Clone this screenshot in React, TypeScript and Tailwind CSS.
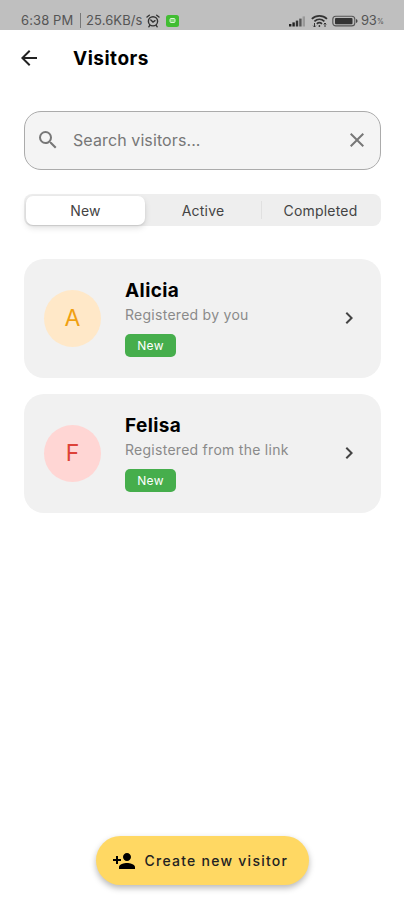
import React, { useState } from "react";
import {
  MdArrowBack,
  MdChevronRight,
  MdClose,
  MdPersonAdd,
  MdSearch,
} from "react-icons/md";

const tabs = ["New", "Active", "Completed"];

const visitors = [
  {
    name: "Alicia",
    source: "Registered by you",
    status: "New",
    avatar: "bg-[#ffe8c8] text-[#f0a010]",
  },
  {
    name: "Felisa",
    source: "Registered from the link",
    status: "New",
    avatar: "bg-[#ffd6d4] text-[#dd4238]",
  },
];

function StatusBar() {
  return (
    <div className="flex h-[30px] items-center justify-between bg-[#bfbfbf] pt-[11px] pr-[20px] pl-[21px] text-[13px] text-[#555]">
      <div className="flex items-center">
        <span className="w-[54px] whitespace-nowrap tracking-[0.1px]">
          6:38 PM
        </span>
        <span className="ml-[5px] h-[15px] w-px bg-[#777]" />
        <span className="ml-[5px] w-[58px] whitespace-nowrap tracking-[0.1px]">
          25.6KB/s
        </span>
        <svg
          className="ml-[2px] h-[14px] w-[14px]"
          viewBox="0 0 14 14"
          fill="none"
          stroke="#333"
          strokeWidth="1.4"
          strokeLinecap="round"
        >
          <circle cx="7" cy="7.3" r="4.6" />
          <path d="M1 3 3.3 1.2M13 3l-2.3-1.8M4.8 6 7 8l2-1.3M3.8 11.4 2.8 12.8M10.2 11.4l1 1.4" />
        </svg>
        <svg className="ml-[6px] h-3 w-[13px]" viewBox="0 0 13 12">
          <rect width="13" height="12" rx="2.5" fill="#41bd32" />
          <rect
            x="4"
            y="3.5"
            width="5"
            height="4"
            rx="1"
            fill="#7ed673"
            stroke="#d9f5d5"
          />
        </svg>
      </div>
      <div className="flex items-center">
        <svg className="h-3 w-[17px]" viewBox="0 0 17 12">
          <rect x="0" y="9" width="2.4" height="2.5" fill="#222" />
          <rect x="3.4" y="7.4" width="2.4" height="4.1" fill="#222" />
          <rect x="6.8" y="5.6" width="2.4" height="5.9" fill="#333" />
          <rect x="10.2" y="3.6" width="2.4" height="7.9" fill="#555" />
          <rect x="13.6" y="1.4" width="2.4" height="10.1" fill="#999" />
        </svg>
        <svg
          className="ml-[5px] h-[14px] w-[17px]"
          viewBox="0 0 17 14"
          fill="none"
          stroke="#333"
          strokeWidth="1.7"
        >
          <path d="M.8 4.8c4.4-4 10.8-4 15.2 0M3.4 7.4c3-2.7 7-2.7 10 0M5.8 9.8c1.6-1.4 3.6-1.4 5.2 0" />
          <circle cx="8.4" cy="12" r=".9" fill="#333" stroke="none" />
          <path
            d="M3.5 9v4M2.2 11.7l1.3 1.3 1.3-1.3M14 13V9M12.7 10.3 14 9l1.3 1.3"
            strokeWidth="1"
          />
        </svg>
        <svg className="ml-[4px] h-[12px] w-[26px]" viewBox="0 0 26 12">
          <rect
            x=".8"
            y="1.3"
            width="22"
            height="9.6"
            rx="3"
            fill="#bbb"
            stroke="#555"
            strokeWidth="1.1"
          />
          <rect x="3" y="3" width="17.5" height="6.2" rx="1" fill="#333" />
          <path d="M24 4v4q1.6-.5 1.6-2T24 4" fill="#444" />
        </svg>
        <span className="ml-[3px] w-4 tracking-[-0.2px]">93</span>
        <span className="w-[7px] pt-[3px] text-[7px]">%</span>
      </div>
    </div>
  );
}

export default function App() {
  const [activeTab, setActiveTab] = useState("New");
  const [query, setQuery] = useState("");

  return (
    <div className="flex h-[900px] w-[404px] flex-col bg-white font-['Inter',sans-serif] text-black">
      <StatusBar />

      <header className="flex h-14 items-center pl-[17px]">
        <button type="button" aria-label="Back">
          <MdArrowBack size={24} className="text-[#222]" />
        </button>
        <h1 className="ml-8 pt-[2px] text-[19px] font-bold tracking-[0.5px]">
          Visitors
        </h1>
      </header>

      <main className="flex flex-1 flex-col px-6 pt-[25px]">
        <div className="flex h-[59px] w-[357px] items-center rounded-[17px] border border-[#ababab] bg-[#f4f4f4] pr-[11px] pb-px pl-[11px] text-[#777]">
          <MdSearch size={24} />
          <input
            type="text"
            value={query}
            onChange={(e) => setQuery(e.target.value)}
            placeholder="Search visitors..."
            className="ml-[13px] min-w-0 flex-1 text-[16px] tracking-[0.1px] outline-none placeholder:text-[#777]"
          />
          <button type="button" aria-label="Clear" onClick={() => setQuery("")}>
            <MdClose size={24} />
          </button>
        </div>

        <div className="mt-6 flex h-8 w-[357px] items-center rounded-lg bg-[#eeeeee] p-[2px]">
          {tabs.map((tab, i) => (
            <React.Fragment key={tab}>
              {i === 2 && <span className="h-[18px] w-px bg-[#e0e0e0]" />}
              <button
                type="button"
                onClick={() => setActiveTab(tab)}
                className={`h-[29px] rounded-[7px] text-[14px] tracking-[0.2px] text-[#444] ${
                  i === 0 ? "w-[119px]" : i === 1 ? "w-[116px]" : "w-[117px]"
                } ${
                  activeTab === tab
                    ? "bg-white shadow-[0_3px_6px_rgba(0,0,0,0.12),0_1px_2px_rgba(0,0,0,0.08)]"
                    : ""
                }`}
              >
                {tab}
              </button>
            </React.Fragment>
          ))}
        </div>

        <div className="mt-[33px] flex w-[357px] flex-col gap-4">
          {visitors.map((visitor) => (
            <div
              key={visitor.name}
              className="flex h-[119px] items-center rounded-[20px] bg-[#f1f1f1] pr-5 pb-px pl-5"
            >
              <div
                className={`flex h-[57px] w-[57px] items-center justify-center rounded-full text-[23px] ${visitor.avatar}`}
              >
                {visitor.name[0]}
              </div>
              <div className="ml-6 flex flex-1 flex-col items-start">
                <h2 className="text-[19px] leading-6 font-bold tracking-[0.4px]">
                  {visitor.name}
                </h2>
                <p className="mt-[2px] text-[14px] leading-5 tracking-[0.27px] text-[#8a8a8a]">
                  {visitor.source}
                </p>
                <span className="mt-[9px] flex h-[23px] w-[51px] items-center justify-center rounded-[5px] bg-[#46ae4c] text-[12px] tracking-[0.3px] text-white">
                  {visitor.status}
                </span>
              </div>
              <MdChevronRight size={24} className="text-[#444]" />
            </div>
          ))}
        </div>

        <button
          type="button"
          className="mt-auto mb-[15px] flex h-[49px] w-[213px] items-center self-center rounded-full bg-[#ffd863] pl-4 text-[14px] font-medium text-[#222] shadow-[0_3px_6px_rgba(0,0,0,0.28)]"
        >
          <MdPersonAdd size={24} className="text-black" />
          <span className="ml-[9px] tracking-[1.25px] whitespace-nowrap">
            Create new visitor
          </span>
        </button>
      </main>
    </div>
  );
}
